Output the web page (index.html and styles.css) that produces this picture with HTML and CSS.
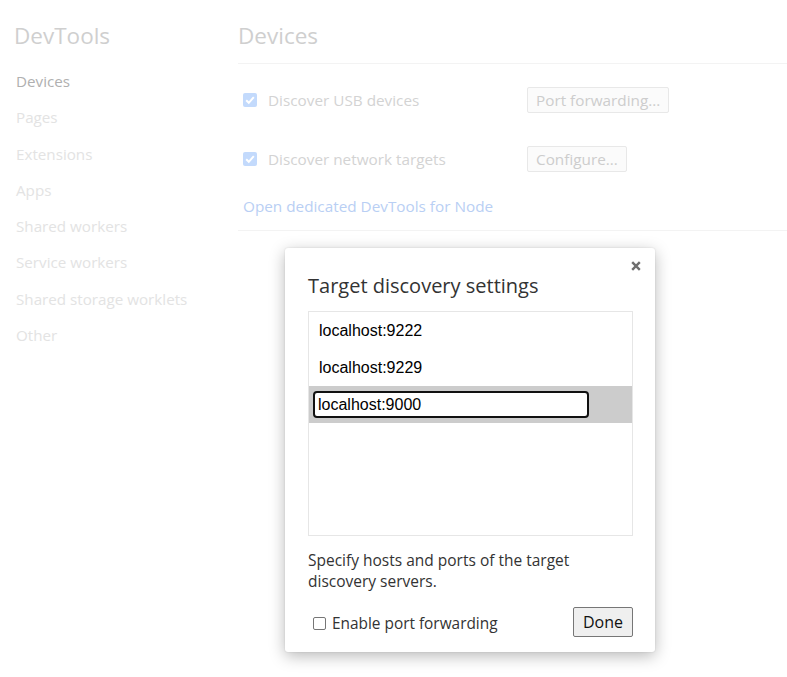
FILE: index.html
```html
<!DOCTYPE html>
<html>
<head>
<meta charset="utf-8">
<link rel="stylesheet" href="styles.css">
</head>
<body>
<div class="page">
  <aside class="sidebar">
    <h1 class="brand">DevTools</h1>
    <nav class="nav">
      <div class="nav-item active">Devices</div>
      <div class="nav-item">Pages</div>
      <div class="nav-item">Extensions</div>
      <div class="nav-item">Apps</div>
      <div class="nav-item">Shared workers</div>
      <div class="nav-item">Service workers</div>
      <div class="nav-item">Shared storage worklets</div>
      <div class="nav-item">Other</div>
    </nav>
  </aside>
  <main class="main">
    <h2 class="heading">Devices</h2>
    <section class="settings">
      <div class="row">
        <label class="check-label"><span class="fake-check"><svg viewBox="0 0 14 14" width="14" height="14"><path d="M3.2 7.2 L5.8 9.8 L10.8 4.2" fill="none" stroke="#fff" stroke-width="2"/></svg></span>Discover USB devices</label>
        <span class="btn-faded">Port forwarding...</span>
      </div>
      <div class="row">
        <label class="check-label"><span class="fake-check"><svg viewBox="0 0 14 14" width="14" height="14"><path d="M3.2 7.2 L5.8 9.8 L10.8 4.2" fill="none" stroke="#fff" stroke-width="2"/></svg></span>Discover network targets</label>
        <span class="btn-faded">Configure...</span>
      </div>
      <div class="link">Open dedicated DevTools for Node</div>
    </section>
  </main>
</div>

<div class="dialog">
  <div class="close"><svg viewBox="0 0 10 10" width="10" height="10"><path d="M1.2 1.2 L8.8 8.8 M8.8 1.2 L1.2 8.8" stroke="#6f6f6f" stroke-width="2.4" fill="none"/></svg></div>
  <div class="dialog-title">Target discovery settings</div>
  <div class="list">
    <div class="list-row">localhost:9222</div>
    <div class="list-row">localhost:9229</div>
    <div class="list-row selected"><div class="editor">localhost:9000</div></div>
  </div>
  <p class="help">Specify hosts and ports of the target discovery servers.</p>
  <div class="footer">
    <label class="pf-label"><span class="pf-box"></span>Enable port forwarding</label>
    <span class="done">Done</span>
  </div>
</div>
</body>
</html>
```

FILE: styles.css
```css
html, body {
  margin: 0;
  padding: 0;
  background: #fff;
}
body {
  font-family: "Open Sans", "Noto Sans", sans-serif;
  width: 787px;
  height: 677px;
  overflow: hidden;
  position: relative;
}
.page {
  display: flex;
}
.sidebar {
  width: 224px;
  padding-left: 14px;
  flex: none;
}
.brand {
  margin: 20px 0 0 0;
  font-size: 22.5px;
  font-weight: 400;
  line-height: 32px;
  color: #cfcfcf;
}
.nav {
  margin-top: 11px;
  padding-left: 2px;
}
.nav-item {
  font-size: 15.2px;
  line-height: 36.25px;
  height: 36.25px;
  color: #e3e3e3;
}
.nav-item.active {
  color: #b0b0b0;
}
.main {
  flex: 1;
}
.heading {
  margin: 20px 0 0 0;
  font-size: 22.5px;
  font-weight: 400;
  line-height: 32px;
  color: #cfcfcf;
  padding-bottom: 11px;
  border-bottom: 1px solid #f3f3f3;
}
.settings {
  padding: 22px 0 0 5px;
  border-bottom: 1px solid #f3f3f3;
  height: 167px;
  box-sizing: border-box;
}
.row {
  display: flex;
  align-items: center;
  height: 28px;
  margin-bottom: 31px;
}
.check-label {
  display: flex;
  align-items: center;
  width: 284px;
  font-size: 15.3px;
  color: #d3d3d3;
}
.fake-check {
  width: 14px;
  height: 14px;
  border-radius: 2px;
  background: #c3dafc;
  margin-right: 11px;
  display: inline-flex;
}
.btn-faded {
  display: inline-block;
  border: 1px solid #e8e8e8;
  border-radius: 2px;
  background: #fbfbfb;
  color: #cdcdcd;
  font-size: 15.3px;
  line-height: 24px;
  padding: 0 8px 0 8px;
}
.link {
  margin-top: -8px;
  font-size: 15.3px;
  color: #b9cff4;
}

.dialog {
  position: absolute;
  left: 285px;
  top: 248px;
  width: 370px;
  height: 404px;
  box-sizing: border-box;
  background: #fff;
  border-radius: 3px;
  box-shadow: 0 4px 16px rgba(0,0,0,0.28), 0 0 2px rgba(0,0,0,0.12);
  padding: 0 22px 0 23px;
}
.close {
  position: absolute;
  right: 14px;
  top: 13px;
  width: 10px;
  height: 10px;
  display: flex;
}
.dialog-title {
  margin-top: 23px;
  font-size: 20px;
  line-height: 30px;
  color: #333;
}
.list {
  margin-top: 10px;
  height: 225px;
  box-sizing: border-box;
  border: 1px solid #e6e6e6;
}
.list-row {
  height: 37px;
  display: flex;
  align-items: center;
  padding-left: 10px;
  font-family: "Liberation Sans", Arial, sans-serif;
  font-size: 16px;
  color: #000;
}
.list-row.selected {
  background: #cccccc;
  padding-left: 4px;
}
.editor {
  width: 276px;
  height: 27px;
  box-sizing: border-box;
  border: 2px solid #111;
  border-radius: 4px;
  background: #fff;
  padding-left: 3px;
  display: flex;
  align-items: center;
  font-family: "Liberation Sans", Arial, sans-serif;
  font-size: 16px;
}
.help {
  margin: 14px 0 0 0;
  font-size: 15.5px;
  line-height: 20.5px;
  color: #333;
  width: 300px;
}
.footer {
  margin-top: 16px;
  display: flex;
  align-items: center;
  justify-content: space-between;
}
.pf-label {
  display: flex;
  align-items: center;
  font-size: 15.4px;
  color: #333;
  padding-left: 5px;
  padding-top: 3px;
}
.pf-box {
  width: 13px;
  height: 13px;
  box-sizing: border-box;
  border: 1px solid #767676;
  border-radius: 2px;
  margin-right: 6px;
}
.done {
  display: inline-block;
  box-sizing: border-box;
  height: 30px;
  line-height: 28px;
  padding: 0 9px;
  border: 1px solid #767676;
  border-radius: 2px;
  background: #efefef;
  font-size: 16px;
  color: #111;
}
```
